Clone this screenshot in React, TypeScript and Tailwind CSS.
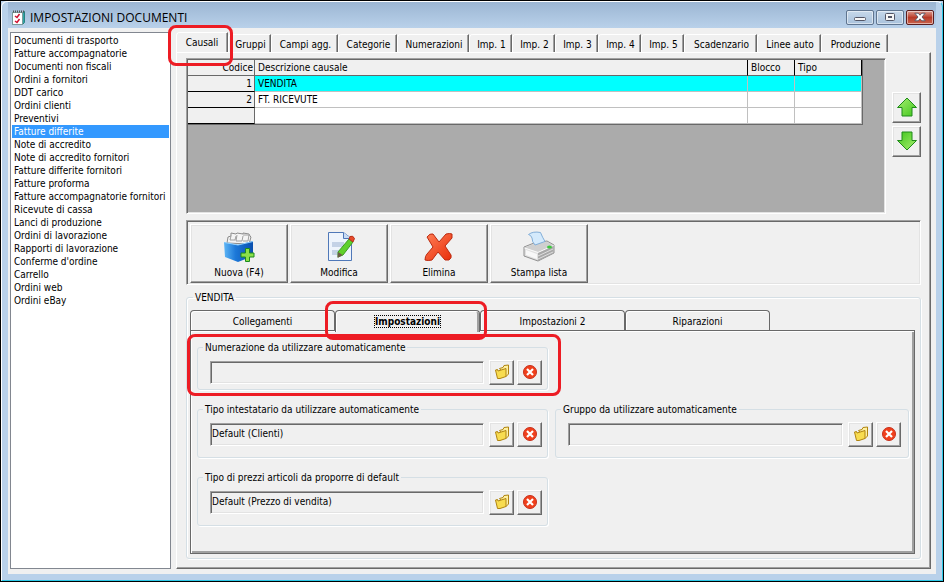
import React, { useState } from "react";

const FONT = "font-['DejaVu_Sans_Condensed','Liberation_Sans',Arial,sans-serif]";
const RAISED =
  "border border-t-white border-l-white border-r-[#696969] border-b-[#696969] shadow-[inset_-1px_-1px_0_#a0a0a0,inset_1px_1px_0_#e3e3e3]";
const SUNKEN =
  "border border-t-[#a0a0a0] border-l-[#a0a0a0] border-r-white border-b-white shadow-[inset_1px_1px_0_#696969,inset_-1px_-1px_0_#e3e3e3]";

const DOCUMENTS = [
  "Documenti di trasporto",
  "Fatture accompagnatorie",
  "Documenti non fiscali",
  "Ordini a fornitori",
  "DDT carico",
  "Ordini clienti",
  "Preventivi",
  "Fatture differite",
  "Note di accredito",
  "Note di accredito fornitori",
  "Fatture differite fornitori",
  "Fatture proforma",
  "Fatture accompagnatorie fornitori",
  "Ricevute di cassa",
  "Lanci di produzione",
  "Ordini di lavorazione",
  "Rapporti di lavorazione",
  "Conferme d'ordine",
  "Carrello",
  "Ordini web",
  "Ordini eBay",
];

const TABS = [
  { label: "Gruppi", width: "w-[43px]" },
  { label: "Campi agg.", width: "w-[67px]" },
  { label: "Categorie", width: "w-[59px]" },
  { label: "Numerazioni", width: "w-[72px]" },
  { label: "Imp. 1", width: "w-[43px]" },
  { label: "Imp. 2", width: "w-[43px]" },
  { label: "Imp. 3", width: "w-[43px]" },
  { label: "Imp. 4", width: "w-[43px]" },
  { label: "Imp. 5", width: "w-[43px]" },
  { label: "Scadenzario", width: "w-[73px]" },
  { label: "Linee auto", width: "w-[64px]" },
  { label: "Produzione", width: "w-[67px]" },
];

export default function App() {
  const [selected, setSelected] = useState("Fatture differite");

  return (
    <div
      className={`min-h-screen w-full flex flex-col bg-[#b9d1ea] border border-black text-[10px] leading-[13px] text-black ${FONT}`}
    >
      <div className="flex-1 flex flex-col rounded-t-md border border-l-white border-t-white border-r-[#2cc9e8] border-b-[#2cc9e8] px-[6px] pb-[6px]">
        <TitleBar />

        <div className="flex-1 flex gap-[5px] bg-[#f0f0f0] pl-[2px] pr-[5px] pt-1 pb-[5px]">
          {/* Document list */}
          <ul className="w-[161px] shrink-0 bg-white border border-[#828790] p-px overflow-hidden">
            {DOCUMENTS.map((name) => (
              <li key={name}>
                <button
                  onClick={() => setSelected(name)}
                  className={`block w-full h-[13px] pl-[2px] text-left whitespace-nowrap ${
                    name === selected ? "bg-[#3399ff] text-white" : ""
                  }`}
                >
                  {name}
                </button>
              </li>
            ))}
          </ul>

          <main className="flex-1 min-w-0 flex flex-col">
            {/* Main tabs */}
            <div className="flex items-end h-5">
              <button className="relative z-10 w-[52px] h-5 rounded-tl-sm border-t border-l border-white border-r border-r-[#696969] shadow-[inset_-1px_0_0_#a0a0a0] bg-[#f0f0f0]">
                Causali
                <Highlight className="-left-[9px] -right-[6px] -top-[8px] -bottom-[14px]" />
              </button>
              {TABS.map((tab) => (
                <button
                  key={tab.label}
                  className={`${tab.width} h-[18px] shrink-0 pt-px pl-[2px] whitespace-nowrap rounded-tl-sm border-t border-l border-white border-r border-r-[#696969] shadow-[inset_-1px_0_0_#a0a0a0]`}
                >
                  {tab.label}
                </button>
              ))}
            </div>

            <div className="flex-1 flex flex-col border border-t-white border-l-white border-r-[#696969] border-b-[#696969] shadow-[inset_-1px_-1px_0_#a0a0a0] pl-[9px] pr-[9px] pt-[5px] pb-[9px]">
              <div className="flex gap-[6px]">
                <div className={`flex-1 h-[156px] p-px bg-[#ababab] ${SUNKEN}`}>
                  <CausaliTable />
                </div>
                <div className="flex flex-col gap-[3px] pt-[34px]">
                  <button
                    aria-label="Sposta su"
                    className={`w-[29px] h-[31px] pb-[2px] flex items-center justify-center ${RAISED}`}
                  >
                    <ArrowIcon />
                  </button>
                  <button
                    aria-label="Sposta giù"
                    className={`w-[29px] h-[31px] pb-[2px] flex items-center justify-center ${RAISED}`}
                  >
                    <ArrowIcon className="rotate-180" />
                  </button>
                </div>
              </div>

              {/* Toolbar */}
              <div className={`mt-[6px] h-[65px] flex gap-[2px] pl-[3px] pt-[3px] ${SUNKEN}`}>
                <ToolButton label="Nuova (F4)" icon={<NewIcon />} />
                <ToolButton label="Modifica" icon={<EditIcon />} />
                <ToolButton label="Elimina" icon={<DeleteIcon />} />
                <ToolButton label="Stampa lista" icon={<PrinterIcon />} />
              </div>

              {/* Detail */}
              <fieldset className="flex-1 flex flex-col mt-[6px] min-w-0 border border-[#d5dfe5] rounded-[3px] pl-[3px] pr-[5px] pb-[4px] shadow-[1px_1px_0_#fff,inset_1px_1px_0_#fff]">
                <legend className="ml-[3px] px-[2px]">VENDITA</legend>
                <div className="flex flex-col flex-1 pt-[6px]">
                  <div className="flex h-[20px]">
                    <DetailTab label="Collegamenti" />
                    <DetailTab label="Impostazioni" active />
                    <DetailTab label="Impostazioni 2" />
                    <DetailTab label="Riparazioni" />
                  </div>
                  <div className="flex-1 grid grid-cols-[351px_minmax(0,1fr)] content-start gap-x-[7px] gap-y-[13px] border border-[#696969] shadow-[inset_1px_1px_0_#fff,inset_-2px_-2px_0_#a0a0a0] pl-[6px] pr-[5px] pt-[10px]">
                    <PickerField
                      label="Numerazione da utilizzare automaticamente"
                      value=""
                      highlighted
                    />
                    <div />
                    <PickerField
                      label="Tipo intestatario da utilizzare automaticamente"
                      value="Default (Clienti)"
                    />
                    <PickerField label="Gruppo da utilizzare automaticamente" value="" />
                    <PickerField
                      label="Tipo di prezzi articoli da proporre di default"
                      value="Default (Prezzo di vendita)"
                    />
                  </div>
                </div>
              </fieldset>
            </div>
          </main>
        </div>
      </div>
    </div>
  );
}

function TitleBar() {
  const button =
    "w-[28px] h-[15px] rounded-[2px] border flex items-center justify-center shadow-[inset_0_0_0_1px_rgba(255,255,255,0.5)]";
  return (
    <header className="h-[26px] flex items-center bg-gradient-to-b from-[#9cb6d3] to-[#b9d1ea] pl-[3px]">
      <AppIcon />
      <h1 className="flex-1 pl-[5px] pt-[5px] text-[12px] leading-[16px] font-['Open_Sans','Noto_Sans',sans-serif]">
        IMPOSTAZIONI DOCUMENTI
      </h1>
      <div className="flex gap-[2px] pr-[2px] pt-[4px]">
        <button
          aria-label="Riduci a icona"
          className={`${button} border-[#5f7590] bg-gradient-to-b from-[#c6d8ea] to-[#a9c2dc]`}
        >
          <svg width="12" height="10" viewBox="0 0 12 10">
            <rect x="0.5" y="5.5" width="11" height="3" rx="1" fill="#f6f6f6" stroke="#535666" />
          </svg>
        </button>
        <button
          aria-label="Ingrandisci"
          className={`${button} border-[#5f7590] bg-gradient-to-b from-[#c6d8ea] to-[#a9c2dc]`}
        >
          <svg width="12" height="10" viewBox="0 0 12 10">
            <rect x="1.5" y="1.5" width="9" height="7" rx="1" fill="#f6f6f6" stroke="#535666" />
            <rect x="4.5" y="4.5" width="3" height="1" fill="#a9c2dc" stroke="#535666" />
          </svg>
        </button>
        <button
          aria-label="Chiudi"
          className={`${button} border-[#5b1d1d] bg-gradient-to-b from-[#dc9a8f] via-[#b93a28] to-[#c9624c]`}
        >
          <svg width="12" height="10" viewBox="0 0 12 10">
            <path
              d="M.8 1.2h3.4L6 3.2l1.800-2h3.400L8 5l3.200 3.800H7.800L6 6.800l-1.800 2H.8L4 5z"
              fill="#fff"
              stroke="#535666"
              strokeWidth="0.9"
            />
          </svg>
        </button>
      </div>
    </header>
  );
}

function CausaliTable() {
  const rows = [
    { code: "1", name: "VENDITA" },
    { code: "2", name: "FT. RICEVUTE" },
    { code: "", name: "" },
  ];
  return (
    <table className="w-[675px] table-fixed border-separate border-spacing-0 border-r border-b border-[#696969] bg-white">
      <thead>
        <tr className="bg-[#f0f0f0] text-left">
          <th className="w-[67px] h-4 pr-px font-normal text-right border-b border-r border-[#696969]">
            Codice
          </th>
          <th className="pl-[3px] font-normal border-b border-r border-b-[#696969] border-r-black">
            Descrizione causale
          </th>
          <th className="w-[47px] pl-[3px] font-normal border-b border-r border-b-[#696969] border-r-black">
            Blocco
          </th>
          <th className="w-[67px] pl-[3px] font-normal border-b border-r border-b-[#696969] border-r-black">
            Tipo
          </th>
        </tr>
      </thead>
      <tbody>
        {rows.map((row, i) => (
          <tr key={i} className={i === 0 ? "bg-[#00ffff]" : ""}>
            <td className="h-4 pr-[2px] text-right bg-[#f0f0f0] border-b border-r border-b-black border-r-[#696969]">
              {row.code}
            </td>
            <td className="pl-[3px] border-b border-r border-[#c0c0c0]">{row.name}</td>
            <td className="border-b border-r border-[#c0c0c0]" />
            <td className="border-b border-r border-[#c0c0c0]" />
          </tr>
        ))}
      </tbody>
    </table>
  );
}

function ToolButton({ label, icon }: { label: string; icon: React.ReactNode }) {
  return (
    <button className={`w-[98px] h-[59px] flex flex-col items-center pt-[6px] ${RAISED}`}>
      {icon}
      <span className="mt-[3px]">{label}</span>
    </button>
  );
}

function DetailTab({ label, active }: { label: string; active?: boolean }) {
  return (
    <button
      className={`relative w-[145px] ${
        active
          ? "z-10 h-[22px] bg-[#f0f0f0] font-bold shadow-[inset_1px_1px_0_#fff,inset_-2px_0_0_#a0a0a0]"
          : "h-[20px] pt-px shadow-[inset_1px_1px_0_#fff]"
      } rounded-t-[4px] border border-b-0 border-[#696969]`}
    >
      <span className={active ? "outline-1 outline-dotted outline-black" : ""}>{label}</span>
      {active && <Highlight className="-left-[11px] -right-[8px] -top-[10px] -bottom-[8px]" />}
    </button>
  );
}

function PickerField({
  label,
  value,
  highlighted,
}: {
  label: string;
  value: string;
  highlighted?: boolean;
}) {
  return (
    <fieldset
      className={`relative min-w-0 border border-[#d5dfe5] rounded-[3px] shadow-[1px_1px_0_#fff] pl-[12px] pr-[5px] ${
        highlighted ? "h-[49px]" : "h-[55px]"
      }`}
    >
      <legend className="-ml-[7px] px-[2px]">{label}</legend>
      <div className="flex items-center gap-[3px] pt-[6px]">
        <input
          readOnly
          aria-label={label}
          defaultValue={value}
          className={`flex-1 min-w-0 max-w-[275px] h-[23px] mr-[2px] pl-px pb-[3px] bg-[#f0f0f0] outline-none ${SUNKEN}`}
        />
        <button
          aria-label="Scegli"
          className={`w-[25px] h-[25px] pb-[2px] flex items-center justify-center ${RAISED}`}
        >
          <FolderIcon />
        </button>
        <button
          aria-label="Cancella"
          className={`w-[25px] h-[25px] pb-[2px] flex items-center justify-center ${RAISED}`}
        >
          <ClearIcon />
        </button>
      </div>
      {highlighted && <Highlight className="-left-[11px] -right-[14px] -top-[20px] -bottom-[7px]" />}
    </fieldset>
  );
}

// Red frame drawn over a control
function Highlight({ className }: { className: string }) {
  return (
    <span
      className={`absolute z-20 pointer-events-none rounded-[8px] border-[3px] border-[#ed1c24] ${className}`}
    />
  );
}

/* Icons */

function AppIcon() {
  return (
    <svg width="14" height="16" viewBox="0 0 14 16" className="mt-[5px]">
      <path d="M11.5 2.5l2-1v11l-2 2z" fill="#2fa8a8" stroke="#2a8080" />
      <rect x="1.5" y="2.5" width="10" height="12" fill="#fff" stroke="#7a9a9a" />
      <path d="M2 1.500h11" stroke="#555" strokeWidth="2" strokeDasharray="1 1" />
      <path d="M4 6l2 1.500L8.500 4M4 11l2 1.500L8.500 9" fill="none" stroke="#d01030" strokeWidth="1.500" />
    </svg>
  );
}

function ArrowIcon({ className = "" }: { className?: string }) {
  return (
    <svg width="22" height="20" viewBox="0 0 22 20" className={className}>
      <defs>
        <linearGradient id="arrow" x1="0" y1="0" x2="1" y2="1">
          <stop offset="0" stopColor="#a8f070" />
          <stop offset="1" stopColor="#3fc41c" />
        </linearGradient>
      </defs>
      <path d="M11 1L20.500 10.500H16V19H6V10.500H1.500z" fill="url(#arrow)" stroke="#1f8a1a" />
    </svg>
  );
}

function NewIcon() {
  return (
    <svg width="32" height="32" viewBox="0 0 32 32">
      <defs>
        <linearGradient id="box" x1="0" y1="0" x2="1" y2="0">
          <stop offset="0" stopColor="#5db5f5" />
          <stop offset="0.4" stopColor="#1c78d8" />
          <stop offset="1" stopColor="#0a4fae" />
        </linearGradient>
      </defs>
      <path d="M4 12l1-6 3-1V2l5 1 1-1 6 1V2l6 1 1 2 1 1-2 7z" fill="#f4f4f4" stroke="#8b8b8b" />
      <path d="M8 5L7 9h5l1-4M14 4l-1 6h6l1-5M20 4h6l-1 6h-5" fill="none" stroke="#a0a0a0" />
      <path d="M1 11l3 1 11 2 15-4v15l-15 6-13-5z" fill="url(#box)" />
      <path d="M1.500 11.500L15 14l15-3.500" fill="none" stroke="#8fd0ff" />
      <path
        d="M22.500 17.500h4v4.500H31v4h-4.500v4.500h-4V26H18v-4h4.500z"
        fill="#8be04a"
        stroke="#1c8a1c"
      />
    </svg>
  );
}

function EditIcon() {
  return (
    <svg width="32" height="32" viewBox="0 0 32 32">
      <path d="M5.500 1.500h15l8 6v22h-23z" fill="#eef4fc" stroke="#4f78b8" />
      <path d="M20.500 1.500v6h8" fill="#c9dcf4" stroke="#4f78b8" />
      <path d="M9 11h12v5H9zM9 19h10v5H9z" fill="#c4d2e6" />
      <path d="M15 21L26 8l4 3-10 13-5 2z" fill="#5fd02c" stroke="#3c9c24" />
      <path d="M26 8l1-2.500q3-1.500 4.500 2L30 11z" fill="#e64a2a" stroke="#b83018" />
      <path d="M15 21l4.500 3-5 3z" fill="#6c5a48" />
    </svg>
  );
}

function DeleteIcon() {
  return (
    <svg width="32" height="32" viewBox="0 0 32 32">
      <defs>
        <linearGradient id="cross" x1="0" y1="0" x2="1" y2="1">
          <stop offset="0" stopColor="#ff8058" />
          <stop offset="1" stopColor="#e82c08" />
        </linearGradient>
      </defs>
      <path
        d="M4 6q3-4 6-3l6 8 7-8q4-1 6 0v4l-7 8 6 9q1 3-2 5h-4l-7-8-6 8q-4 1-7 0 0-4 2-6l6-7z"
        fill="url(#cross)"
        stroke="#bb2a10"
      />
    </svg>
  );
}

function PrinterIcon() {
  return (
    <svg width="32" height="32" viewBox="0 0 32 32">
      <path d="M1 16l10-4 13-2 7 4v8l-16 8-14-5z" fill="#e0e0e0" stroke="#909090" />
      <path d="M1.500 16.500L15 21l15.500-6.500L24 11l-13 2z" fill="#cfcfcf" />
      <path d="M1.500 17L15 21.500l15.500-7" fill="none" stroke="#fafafa" />
      <path d="M15 22v8l15.500-8v-7z" fill="#a8a8a8" />
      <path d="M3 19l11 4v5L3 24z" fill="#f8f8f8" />
      <path d="M15 25l15-7M15 28l15-7" stroke="#dedede" />
      <path d="M5.500 3.500Q10 0 17.500 1.500q2 5 4.500 9L12 14Q9 11 9 7 8 4 5.500 3.500z" fill="#d4eafc" stroke="#82aed8" />
      <ellipse cx="26.500" cy="16" rx="2.500" ry="1.500" fill="#3cc83c" />
    </svg>
  );
}

function FolderIcon() {
  return (
    <svg width="16" height="16" viewBox="0 0 16 16">
      <path d="M5.500 4.500l3.500-1 1-2 4.500-.5V10L12 12.500z" fill="#fff0a0" stroke="#b08410" />
      <path d="M1.500 6l2-.5.500 1.500 8-2.500v8l-6 2H3.500z" fill="#f8dc50" stroke="#b08410" />
    </svg>
  );
}

function ClearIcon() {
  return (
    <svg width="16" height="16" viewBox="0 0 16 16">
      <circle cx="8" cy="8" r="6.500" fill="#f0401c" stroke="#c8301c" />
      <path d="M5 5l6 6M11 5l-6 6" stroke="#fff" strokeWidth="2.200" />
    </svg>
  );
}
